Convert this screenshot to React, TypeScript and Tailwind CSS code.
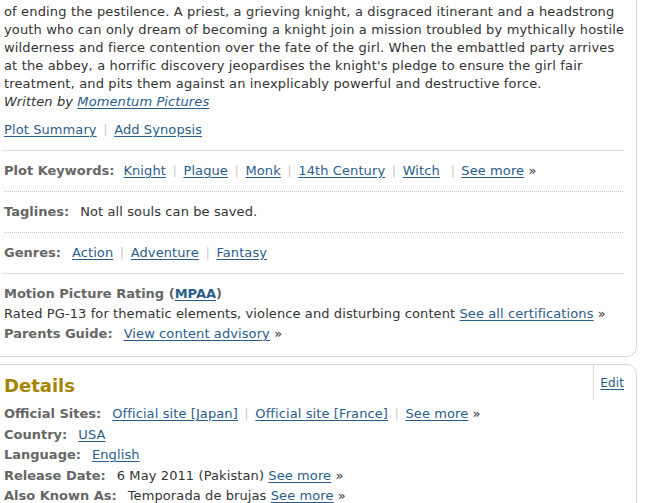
import React from "react";

const link = "text-[#2a5d8c] underline underline-offset-2";

function Sep({ className = "mx-[6.5px]" }: { className?: string }) {
  return <span className={`text-[#cccccc] ${className}`}>|</span>;
}

function Label({ children, className = "mr-[11px]" }: { children: React.ReactNode; className?: string }) {
  return <span className={`font-bold tracking-normal text-[#666666] ${className}`}>{children}</span>;
}

function Row({ children }: { children: React.ReactNode }) {
  return (
    <div className="border-b border-dotted border-[#c8c8c8] py-[11px] leading-[18px] whitespace-nowrap">
      {children}
    </div>
  );
}

const storyline = [
  "of ending the pestilence. A priest, a grieving knight, a disgraced itinerant and a headstrong",
  "youth who can only dream of becoming a knight join a mission troubled by mythically hostile",
  "wilderness and fierce contention over the fate of the girl. When the embattled party arrives",
  "at the abbey, a horrific discovery jeopardises the knight's pledge to ensure the girl fair",
  "treatment, and pits them against an inexplicably powerful and destructive force.",
];

const keywords = ["Knight", "Plague", "Monk", "14th Century", "Witch"];
const genres = ["Action", "Adventure", "Fantasy"];

export default function App() {
  return (
    <div className="h-[503px] w-[650px] overflow-hidden bg-white font-['DejaVu_Sans',Verdana,sans-serif] text-[13px] tracking-[0.1px] text-[#333333]">
      <div className="-ml-[12px] w-[649px]">
        {/* storyline card */}
        <div className="-mt-[10px] rounded-[10px] border border-[#d6d6d6] pl-[15px] pr-[13px] pt-[12px]">
          <div className="leading-[18px] tracking-[0.15px]">
            {storyline.map((l) => (
              <div key={l} className="whitespace-nowrap">
                {l}
              </div>
            ))}
            <div className="italic tracking-[0.1px]">
              Written by <a className={link}>Momentum Pictures</a>
            </div>
          </div>
          <div className="mt-[10px] border-b border-dotted border-[#c8c8c8] pb-[11px] leading-[18px]">
            <a className={link}>Plot Summary</a>
            <Sep />
            <a className={link}>Add Synopsis</a>
          </div>
          <Row>
            <Label className="mr-[9px]">Plot Keywords:</Label>
            {keywords.map((k, i) => (
              <React.Fragment key={k}>
                {i > 0 && <Sep />}
                <a className={link}>{k}</a>
              </React.Fragment>
            ))}
            <Sep className="ml-[11px] mr-[6px]" />
            <a className={link}>See more</a> »
          </Row>
          <Row>
            <Label>Taglines:</Label>
            Not all souls can be saved.
          </Row>
          <Row>
            <Label>Genres:</Label>
            {genres.map((g, i) => (
              <React.Fragment key={g}>
                {i > 0 && <Sep />}
                <a className={link}>{g}</a>
              </React.Fragment>
            ))}
          </Row>
          <div className="pb-[12px] pt-[10px] leading-[20px] whitespace-nowrap">
            <div className="font-bold tracking-normal text-[#666666]">
              Motion Picture Rating (<a className={link}>MPAA</a>)
            </div>
            <div>
              Rated PG-13 for thematic elements, violence and disturbing content{" "}
              <a className={link}>See all certifications</a> »
            </div>
            <div>
              <Label>Parents Guide:</Label>
              <a className={link}>View content advisory</a> »
            </div>
          </div>
        </div>

        {/* details card */}
        <div className="relative mt-[7px] rounded-[10px] border border-[#d6d6d6] pb-[20px] pl-[15px] pr-[13px] pt-[9px]">
          <div className="absolute right-[12px] top-0 h-[35px] border-l border-dotted border-[#c8c8c8] pl-[6px] pt-[10px] text-[12px] leading-[16px]">
            <a className={link}>Edit</a>
          </div>
          <h2 className="text-[18px] font-bold leading-[24px] tracking-normal text-[#a58500]">Details</h2>
          <div className="mt-[6px] leading-[20.5px] whitespace-nowrap">
            <div>
              <Label>Official Sites:</Label>
              <a className={link}>Official site [Japan]</a>
              <Sep />
              <a className={link}>Official site [France]</a>
              <Sep />
              <a className={link}>See more</a> »
            </div>
            <div>
              <Label>Country:</Label>
              <a className={link}>USA</a>
            </div>
            <div>
              <Label>Language:</Label>
              <a className={link}>English</a>
            </div>
            <div>
              <Label>Release Date:</Label>
              6 May 2011 (Pakistan) <a className={link}>See more</a> »
            </div>
            <div>
              <Label>Also Known As:</Label>
              Temporada de brujas <a className={link}>See more</a> »
            </div>
          </div>
        </div>
      </div>
    </div>
  );
}
